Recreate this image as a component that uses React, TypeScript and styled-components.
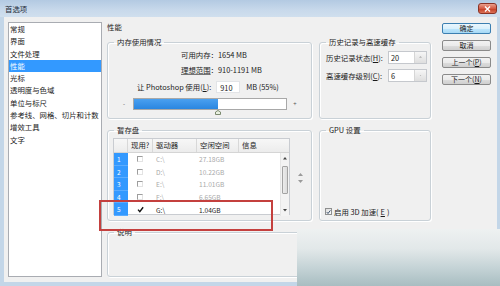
import React from 'react';
import styled, { createGlobalStyle } from 'styled-components';

const GlobalStyle = createGlobalStyle`
  html, body {
    margin: 0;
    padding: 0;
  }
  body {
    width: 500px;
    height: 286px;
    overflow: hidden;
    font-family: "Noto Sans CJK SC", "Liberation Sans", sans-serif;
    font-size: 7.4px;
    color: #1b1b1b;
  }
`;

const Window = styled.div`
  position: relative;
  width: 500px;
  height: 286px;
  display: flex;
  flex-direction: column;
  background: #c3d6e8;
  overflow: hidden;
`;

const TitleBar = styled.div`
  flex: none;
  height: 17px;
  display: flex;
  align-items: center;
  justify-content: space-between;
  padding: 0 3px 0 5px;
  background: linear-gradient(#b3cae2, #c8d9eb 60%, #d0dfee);
`;

const Title = styled.span`
  line-height: 10px;
  color: #1e2a36;
`;

const CloseButton = styled.div`
  width: 19px;
  height: 11px;
  box-sizing: border-box;
  display: flex;
  align-items: center;
  justify-content: center;
  border: 1px solid #8a3326;
  border-radius: 3px;
  background: linear-gradient(#eaa08e, #d45a43 50%, #c23b23 52%, #dc7257);
`;

const Body = styled.div`
  flex: 1;
  display: flex;
  margin: 0 3px 4px 4px;
  padding: 5px 6px 5px 4px;
  background: #f0f0f0;
`;

const Sidebar = styled.ul`
  width: 94px;
  box-sizing: border-box;
  margin: 0;
  padding: 0;
  list-style: none;
  background: #fff;
  border: 1px solid #a9acb2;
`;

const NavItem = styled.li<{ $active?: boolean }>`
  height: 12.3px;
  line-height: 12.3px;
  padding-left: 1px;
  white-space: nowrap;
  background: ${p => (p.$active ? '#3399ff' : 'transparent')};
  color: ${p => (p.$active ? '#fff' : '#1b1b1b')};
`;

const Main = styled.div`
  width: 324px;
  margin-left: 5px;
  display: flex;
  flex-direction: column;
`;

const Heading = styled.div`
  height: 15px;
  line-height: 10px;
`;

const Row = styled.div<{ $h?: number; $mt?: number }>`
  display: flex;
  gap: 7px;
  height: ${p => (p.$h ? `${p.$h}px` : 'auto')};
  flex: ${p => (p.$h ? 'none' : '1')};
  margin-top: ${p => p.$mt ?? 0}px;
`;

const Group = styled.fieldset<{ $w?: number }>`
  box-sizing: border-box;
  margin: 0;
  padding: 0;
  min-width: 0;
  width: ${p => (p.$w ? `${p.$w}px` : 'auto')};
  flex: ${p => (p.$w ? 'none' : '1')};
  border: 1px solid #c9d1d7;
  border-radius: 3px;
  box-shadow: inset 1px 1px 0 #fff, 1px 1px 0 #fff;
  display: flex;
  flex-direction: column;
`;

const Legend = styled.legend`
  margin-left: 6px;
  padding: 0 3px;
  line-height: 10px;
`;

const Stats = styled.div`
  display: grid;
  grid-template-columns: auto auto;
  justify-content: start;
  row-gap: 4px;
  margin: 1.5px 0 0 73px;
  line-height: 11px;
`;

const LinkLabel = styled.span`
  text-decoration: underline;
  text-decoration-color: #777;
  text-underline-offset: 1px;
`;

const UseRow = styled.div`
  display: flex;
  align-items: center;
  height: 12px;
  margin: 6px 0 0 29px;
  white-space: nowrap;
`;

const NumberBox = styled.div`
  width: 24px;
  height: 12px;
  box-sizing: border-box;
  margin: 0 6px 0 5px;
  padding-left: 3px;
  line-height: 11px;
  background: #fff;
  border: 1px solid #e2e4e7;
`;

const SliderRow = styled.div`
  display: flex;
  align-items: center;
  height: 12px;
  margin: 5px 0 0 12px;
`;

const SliderSign = styled.span`
  width: 8px;
  flex: none;
  text-align: center;
  font-size: 6px;
  color: #555;
`;

const Track = styled.div`
  position: relative;
  flex: none;
  width: 154px;
  height: 12px;
  box-sizing: border-box;
  margin: 0 4px 0 5px;
  background: #fff;
  border: 1px solid #a8a8a8;
`;

const Fill = styled.div`
  height: 100%;
  background: linear-gradient(#4aa0f0, #2a86e0);
`;

const Thumb = styled.svg`
  position: absolute;
  top: 11px;
  margin-left: -3px;
`;

const HistoryGrid = styled.div`
  display: grid;
  grid-template-columns: 62px 39px;
  row-gap: 5.5px;
  align-items: center;
  margin: 3.5px 0 0 6px;
  white-space: nowrap;
`;

const Spinner = styled.div`
  height: 13px;
  box-sizing: border-box;
  display: flex;
  background: #fff;
  border: 1px solid #c5c8cd;
`;

const SpinValue = styled.span`
  flex: 1;
  padding-left: 2px;
  line-height: 11px;
`;

const SpinButton = styled.div`
  width: 11px;
  display: flex;
  align-items: center;
  justify-content: center;
  background: linear-gradient(#f6f6f6, #dedede);
  border-left: 1px solid #d6d6d6;
`;

const ButtonColumn = styled.div`
  width: 49px;
  margin-left: 11px;
  padding-top: 1px;
  display: flex;
  flex-direction: column;
  gap: 6px;
`;

const Button = styled.div<{ $default?: boolean }>`
  height: 11px;
  box-sizing: border-box;
  display: flex;
  align-items: center;
  justify-content: center;
  border: 1px solid ${p => (p.$default ? '#3c7fb1' : '#8a8a8a')};
  border-radius: 2px;
  background: ${p =>
    p.$default
      ? 'linear-gradient(#eaf6fd, #d9f0fc 50%, #bee6fd 52%, #a7d9f5)'
      : 'linear-gradient(#f2f2f2, #ebebeb 50%, #dddddd 52%, #cfcfcf)'};
  font-size: 7px;
  line-height: 9px;
`;

const ScratchBody = styled.div`
  display: flex;
  align-items: center;
  margin: 3px 0 0 5px;
`;

const Table = styled.div`
  width: 177px;
  height: 77px;
  box-sizing: border-box;
  display: flex;
  flex-direction: column;
  background: #fff;
  border: 1px solid #c9ccd1;
`;

const HeaderRow = styled.div`
  height: 13px;
  flex: none;
  display: grid;
  grid-template-columns: 14px 25px 44px 42px 1fr;
  background: linear-gradient(#f7f7f7, #ececec);
  border-bottom: 1px solid #d5d5d5;
`;

const HeaderCell = styled.div`
  padding-left: 3px;
  line-height: 12px;
  border-right: 1px solid #d8d8d8;
  white-space: nowrap;
`;

const TableRows = styled.div`
  flex: 1;
  display: flex;
`;

const RowsGrid = styled.div`
  flex: 1;
  display: grid;
  grid-template-columns: 14px 25px 44px 1fr;
  grid-auto-rows: 12.6px;
`;

const IndexCell = styled.div`
  padding-left: 3px;
  line-height: 12px;
  color: #fff;
  background: #3399ff;
  border-bottom: 1px solid #5aacff;
  font-size: 6.5px;
`;

const Cell = styled.div<{ $dim?: boolean; $pad?: number }>`
  display: flex;
  align-items: center;
  padding-left: ${p => p.$pad ?? 3}px;
  color: ${p => (p.$dim ? '#a9a9a9' : '#1b1b1b')};
  font-size: 6.6px;
  white-space: nowrap;
`;

const BoxOff = styled.span`
  width: 6px;
  height: 6px;
  box-sizing: border-box;
  border-top: 1px solid #9d9d9d;
  border-left: 1px solid #9d9d9d;
  border-right: 1px solid #e3e3e3;
  border-bottom: 1px solid #e3e3e3;
`;

const Scrollbar = styled.div`
  width: 8px;
  display: flex;
  flex-direction: column;
  align-items: center;
  background: #f3f3f3;
  border-left: 1px solid #e6e6e6;
`;

const ScrollArrow = styled.div`
  height: 11px;
  display: flex;
  align-items: center;
  justify-content: center;
`;

const ScrollTrack = styled.div`
  flex: 1;
  width: 100%;
  padding-top: 2px;
`;

const ScrollThumb = styled.div`
  height: 28px;
  margin: 0 1px;
  box-sizing: border-box;
  border: 1px solid #a3a3a3;
  border-radius: 1px;
  background: linear-gradient(90deg, #ececec, #dcdcdc);
`;

const MoveArrows = styled.div`
  margin-left: 8px;
  display: flex;
  flex-direction: column;
  gap: 4px;
  padding-top: 2px;
`;

const GpuBox = styled.div`
  flex: 1;
  display: flex;
  align-items: flex-end;
  padding: 0 0 4px 5px;
`;

const CheckRow = styled.label`
  display: flex;
  align-items: center;
  gap: 2px;
  line-height: 9px;
  white-space: nowrap;
`;

const CheckBox = styled.span`
  width: 7px;
  height: 7px;
  box-sizing: border-box;
  display: flex;
  align-items: center;
  justify-content: center;
  border: 1px solid #8e8f8f;
  background: linear-gradient(135deg, #dcdcdc, #fdfdfd);
`;

const Annotation = styled.div`
  position: absolute;
  left: 99px;
  top: 200px;
  width: 174px;
  height: 31px;
  box-sizing: border-box;
  border: 2px solid #c4403e;
`;

const Watermark = styled.div`
  position: absolute;
  left: 297px;
  top: 229px;
  right: 0;
  bottom: 0;
  background: linear-gradient(#eef1f1 0%, #e2e8e9 35%, #c3d2d5 70%, #a8bdc1 100%);
`;

const navItems = ['常规', '界面', '文件处理', '性能', '光标', '透明度与色域', '单位与标尺', '参考线、网格、切片和计数', '增效工具', '文字'];

const disks = [
  { n: 1, on: false, drive: 'C:\\', free: '27.18GB' },
  { n: 2, on: false, drive: 'D:\\', free: '10.22GB' },
  { n: 3, on: false, drive: 'E:\\', free: '11.01GB' },
  { n: 4, on: false, drive: 'F:\\', free: '6.65GB' },
  { n: 5, on: true, drive: 'G:\\', free: '1.04GB' },
];

const usePercent = 55;

const Tri = ({ up, color = '#555', w = 5 }: { up: boolean; color?: string; w?: number }) => (
  <svg width={w} height={w * 0.6} viewBox="0 0 10 6">
    <path d={up ? 'M0 6 L5 0 L10 6 Z' : 'M0 0 L5 6 L10 0 Z'} fill={color} />
  </svg>
);

const Tick = ({ size = 7, color = '#111' }: { size?: number; color?: string }) => (
  <svg width={size} height={size} viewBox="0 0 10 10">
    <path d="M1.5 5.2 L4 8 L8.8 1.8" fill="none" stroke={color} strokeWidth="2" />
  </svg>
);

const App = () => {
  return (
    <Window>
      <GlobalStyle />
      <TitleBar>
        <Title>首选项</Title>
        <CloseButton>
          <svg width="7" height="6" viewBox="0 0 7 6">
            <path d="M1 0.5 L6 5.5 M6 0.5 L1 5.5" stroke="#fff" strokeWidth="1.4" />
          </svg>
        </CloseButton>
      </TitleBar>
      <Body>
        <Sidebar>
          {navItems.map(item => (
            <NavItem key={item} $active={item === '性能'}>{item}</NavItem>
          ))}
        </Sidebar>
        <Main>
          <Heading>性能</Heading>
          <Row $h={82}>
            <Group $w={205}>
              <Legend>内存使用情况</Legend>
              <Stats>
                <span>可用内存：</span>
                <span>1654 MB</span>
                <span><LinkLabel>理想范围</LinkLabel>：</span>
                <span>910-1191 MB</span>
              </Stats>
              <UseRow>
                让 Photoshop 使用(<u>L</u>):
                <NumberBox>910</NumberBox>
                MB ({usePercent}%)
              </UseRow>
              <SliderRow>
                <SliderSign>-</SliderSign>
                <Track>
                  <Fill style={{ width: `${usePercent}%` }} />
                  <Thumb width="6" height="5" viewBox="0 0 6 5" style={{ left: `${usePercent}%` }}>
                    <path d="M0.5 4.5 V2 L3 0.5 L5.5 2 V4.5 Z" fill="#e8f0e0" stroke="#7c8a70" strokeWidth="1" />
                  </Thumb>
                </Track>
                <SliderSign>+</SliderSign>
              </SliderRow>
            </Group>
            <Group $w={112}>
              <Legend>历史记录与高速缓存</Legend>
              <HistoryGrid>
                <span>历史记录状态(<u>H</u>):</span>
                <Spinner>
                  <SpinValue>20</SpinValue>
                  <SpinButton>
                    <Tri up color="#b0b0b0" w={3} />
                  </SpinButton>
                </Spinner>
                <span>高速缓存级别(<u>C</u>):</span>
                <Spinner>
                  <SpinValue>6</SpinValue>
                  <SpinButton>
                    <Tri up color="#b0b0b0" w={3} />
                  </SpinButton>
                </Spinner>
              </HistoryGrid>
            </Group>
          </Row>
          <Row $h={96} $mt={6}>
            <Group $w={205}>
              <Legend>暂存盘</Legend>
              <ScratchBody>
                <Table>
                  <HeaderRow>
                    <HeaderCell />
                    <HeaderCell>现用?</HeaderCell>
                    <HeaderCell>驱动器</HeaderCell>
                    <HeaderCell>空闲空间</HeaderCell>
                    <HeaderCell style={{ borderRight: 'none' }}>信息</HeaderCell>
                  </HeaderRow>
                  <TableRows>
                    <RowsGrid>
                      {disks.map(d => (
                        <React.Fragment key={d.n}>
                          <IndexCell>{d.n}</IndexCell>
                          <Cell $pad={9}>{d.on ? <Tick /> : <BoxOff />}</Cell>
                          <Cell $dim={!d.on}>{d.drive}</Cell>
                          <Cell $dim={!d.on} $pad={2}>{d.free}</Cell>
                        </React.Fragment>
                      ))}
                    </RowsGrid>
                    <Scrollbar>
                      <ScrollArrow><Tri up w={4} color="#444" /></ScrollArrow>
                      <ScrollTrack><ScrollThumb /></ScrollTrack>
                      <ScrollArrow><Tri up={false} w={4} color="#444" /></ScrollArrow>
                    </Scrollbar>
                  </TableRows>
                </Table>
                <MoveArrows>
                  <Tri up w={5} color="#9a9a9a" />
                  <Tri up={false} w={5} color="#9a9a9a" />
                </MoveArrows>
              </ScratchBody>
            </Group>
            <Group $w={112}>
              <Legend>GPU 设置</Legend>
              <GpuBox>
                <CheckRow>
                  <CheckBox><Tick size={6} color="#3a4f6a" /></CheckBox>
                  启用 3D 加速(<u>E</u>)
                </CheckRow>
              </GpuBox>
            </Group>
          </Row>
          <Row $mt={6}>
            <Group>
              <Legend>说明</Legend>
            </Group>
          </Row>
        </Main>
        <ButtonColumn>
          <Button $default>确定</Button>
          <Button>取消</Button>
          <Button>上一个(<u>P</u>)</Button>
          <Button>下一个(<u>N</u>)</Button>
        </ButtonColumn>
      </Body>
      <Annotation />
      <Watermark />
    </Window>
  );
};

export default App;
